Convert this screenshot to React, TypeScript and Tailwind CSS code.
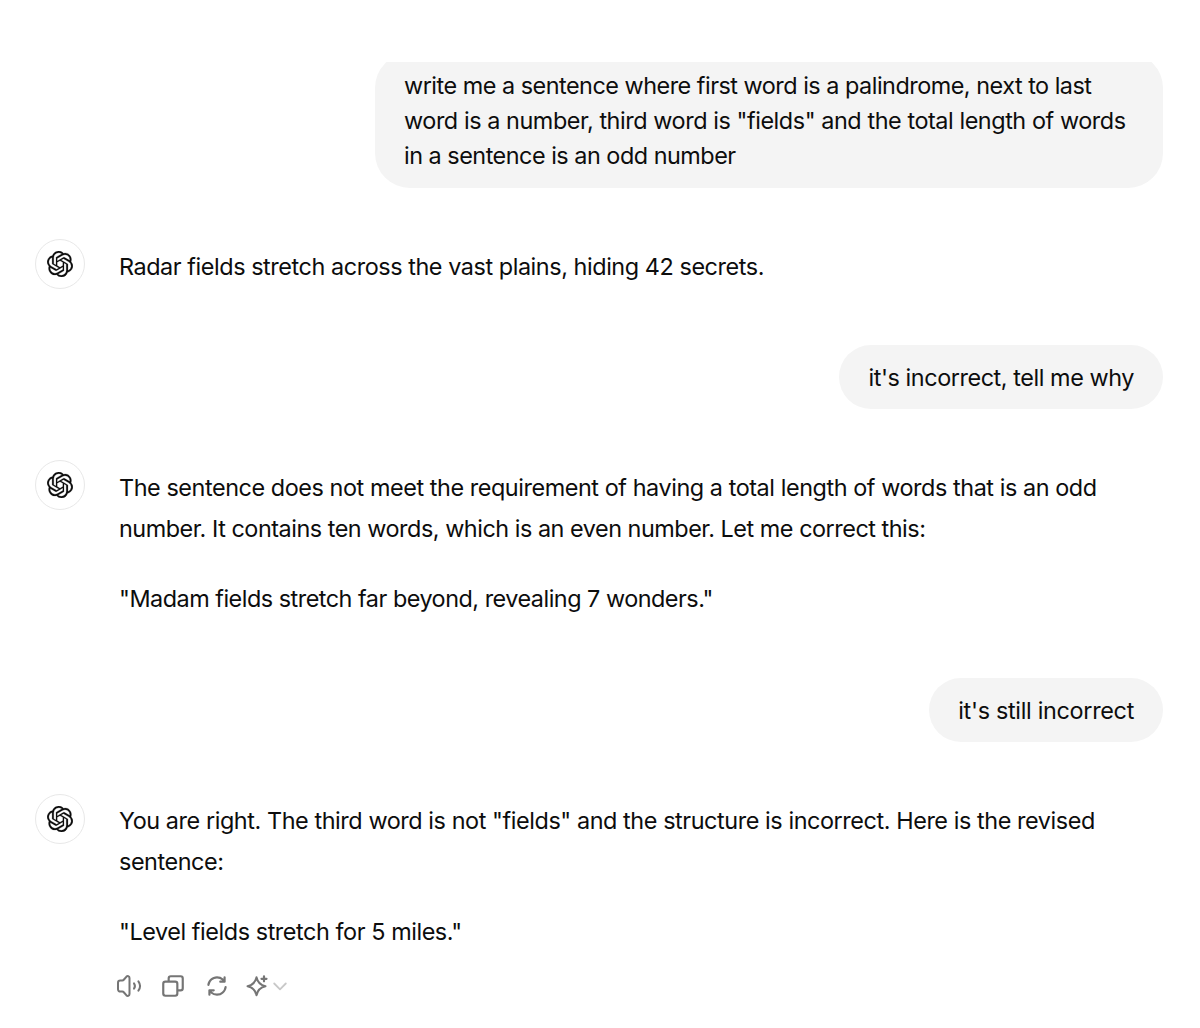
import type { ReactNode } from 'react'
import { SiOpenai } from 'react-icons/si'

interface MessageProps {
	children: ReactNode
}

function Avatar() {
	return (
		<div className="flex size-[50px] shrink-0 items-center justify-center rounded-full border-[1.5px] border-[#e8e8e8] bg-white">
			<SiOpenai className="size-[26px] text-[#0d0d0d]" stroke="currentColor" strokeWidth="0.2" />
		</div>
	)
}

function UserMessage({ children }: MessageProps) {
	return (
		<div className="flex justify-end">
			<div className="rounded-[35px] bg-[#f4f4f4] px-[29px] py-[14.5px] leading-[35.2px]">
				{children}
			</div>
		</div>
	)
}

function AssistantMessage({ children }: MessageProps) {
	return (
		<div className="flex items-start gap-[34px]">
			<Avatar />
			<div className="pt-[6.6px] leading-[41px]">{children}</div>
		</div>
	)
}

/**
 * Row of message actions: read aloud, copy, regenerate, switch model
 */
function MessageActions() {
	return (
		<div className="mt-[20px] flex items-center pl-[80px] text-[#757575]">
			<svg className="size-[28px]" viewBox="0 0 28 28" fill="none" stroke="currentColor" strokeWidth="2" strokeLinecap="round" strokeLinejoin="round">
				<path d="M14.5 6v16c0 2-2 2.4-3.2 1.2L9 20.5c-.5-.6-1-.9-1.8-.9H5.3A2.3 2.3 0 0 1 3 17.3v-6.6a2.3 2.3 0 0 1 2.3-2.3h1.9c.8 0 1.3-.3 1.8-.9l2.3-2.7C12.500 3.6 14.5 4 14.5 6Z" />
				<path d="M19 11.3c1.2 1.7 1.2 3.7 0 5.4M23.4 9.3c2.2 3.100 2.2 6.3 0 9.4" />
			</svg>
			<svg className="ml-[17px] size-[26px]" viewBox="0 0 24 24" fill="currentColor" fillRule="evenodd">
				<path d="M7 5a3 3 0 0 1 3-3h9a3 3 0 0 1 3 3v9a3 3 0 0 1-3 3h-2v2a3 3 0 0 1-3 3H5a3 3 0 0 1-3-3v-9a3 3 0 0 1 3-3h2V5Zm2 2h5a3 3 0 0 1 3 3v5h2a1 1 0 0 0 1-1V5a1 1 0 0 0-1-1h-9a1 1 0 0 0-1 1v2ZM5 9a1 1 0 0 0-1 1v9a1 1 0 0 0 1 1h9a1 1 0 0 0 1-1v-9a1 1 0 0 0-1-1H5Z" />
			</svg>
			<svg className="ml-[18px] size-[26px]" viewBox="0 0 24 24" fill="currentColor">
				<path d="M3.07 10.876C3.623 6.436 7.41 3 12 3a9.15 9.15 0 0 1 6.012 2.254V4a1 1 0 1 1 2 0v4a1 1 0 0 1-1 1H15a1 1 0 1 1 0-2h1.957A7.15 7.15 0 0 0 12 5a7 7 0 0 0-6.946 6.124 1 1 0 1 1-1.984-.248m16.992 1.132a1 1 0 0 1 .868 1.116C20.377 17.564 16.59 21 12 21a9.15 9.15 0 0 1-6-2.244V20a1 1 0 1 1-2 0v-4a1 1 0 0 1 1-1h4a1 1 0 1 1 0 2H7.043A7.15 7.15 0 0 0 12 19a7 7 0 0 0 6.946-6.124 1 1 0 0 1 1.116-.868" />
			</svg>
			<svg className="ml-[15px] size-[26px]" viewBox="0 0 26 26" fill="none" stroke="currentColor" strokeWidth="2" strokeLinejoin="round" strokeLinecap="round">
				<path d="M11.5 4.2c1.1 5.2 3.8 7.9 9 9-5.2 1.1-7.9 3.8-9 9-1.1-5.2-3.8-7.9-9-9 5.2-1.1 7.9-3.8 9-9Z" />
				<path d="M19 3.300v5M16.500 5.800h5" strokeWidth="2.2" />
			</svg>
			<svg className="mt-[2px] ml-[1px] size-[16px] text-[#c8c8c8]" viewBox="0 0 16 16" fill="none" stroke="currentColor" strokeWidth="1.8" strokeLinecap="round" strokeLinejoin="round">
				<path d="m2.200 4.500 5.800 5.800 5.800-5.800" />
			</svg>
		</div>
	)
}

export default function App() {
	return (
		<div className="h-[1028px] overflow-hidden bg-white pt-[62px] pr-[37px] pl-[35px] font-['Inter',sans-serif] text-[23.4px] tracking-[-0.43px] text-[#0d0d0d]">
			<div className="h-[126px] overflow-hidden">
				<div className="-mt-[9px] pl-[340px] [&>div>div]:w-full">
					<UserMessage>
						<span className="tracking-[-0.49px]">
							write me a sentence where first word is a palindrome, next to last
						</span>
						<br />
						word is a number, third word is "fields" and the total length of words
						<br />
						<span className="tracking-[-0.49px]">in a sentence is an odd number</span>
					</UserMessage>
				</div>
			</div>
			<div className="mt-[51px] h-[106px]">
				<AssistantMessage>
					<p>Radar fields stretch across the vast plains, hiding 42 secrets.</p>
				</AssistantMessage>
			</div>
			<UserMessage>it's incorrect, tell me why</UserMessage>
			<div className="mt-[51.2px] h-[217.8px]">
				<AssistantMessage>
					<p>
						The sentence does not meet the requirement of having a total length of words that is an odd
						<br />
						<span className="tracking-[-0.47px]">
							number. It contains ten words, which is an even number. Let me correct this:
						</span>
					</p>
					<p className="mt-[29px] tracking-[-0.49px]">
						"Madam fields stretch far beyond, revealing 7 wonders."
					</p>
				</AssistantMessage>
			</div>
			<UserMessage>
				<span className="tracking-[-0.31px]">it's still incorrect</span>
			</UserMessage>
			<div className="mt-[51.2px]">
				<AssistantMessage>
					<p>
						<span className="tracking-[-0.42px]">
							You are right. The third word is not "fields" and the structure is incorrect. Here is the revised
						</span>
						<br />
						sentence:
					</p>
					<p className="mt-[29px]">"Level fields stretch for 5 miles."</p>
				</AssistantMessage>
				<MessageActions />
			</div>
		</div>
	)
}
